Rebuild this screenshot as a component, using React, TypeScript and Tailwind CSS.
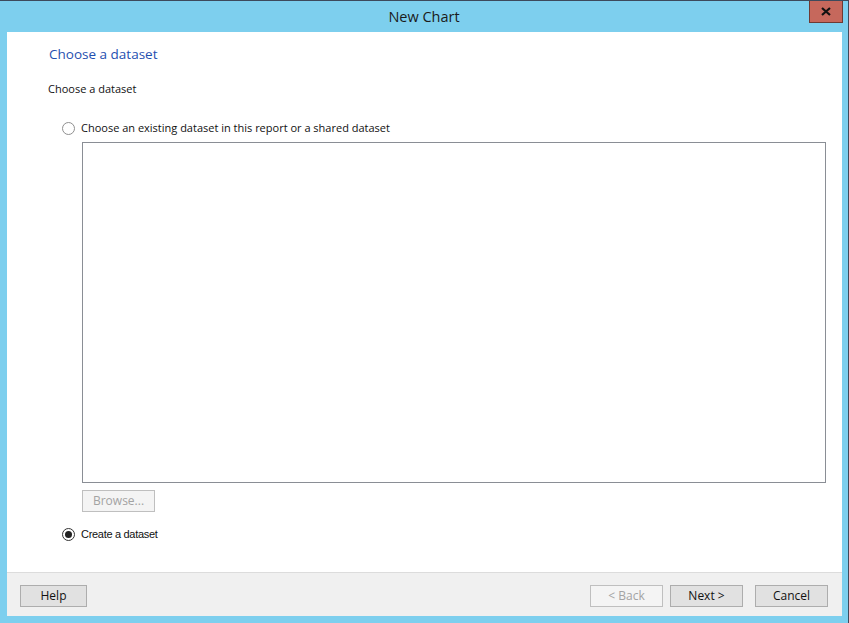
import React from 'react';

const SEGOE = { fontFamily: '"Open Sans", "Noto Sans", sans-serif' };

function Radio({ checked }: { checked?: boolean }) {
  return (
    <span
      className={
        'flex size-[13px] shrink-0 items-center justify-center rounded-full border bg-white ' +
        (checked ? 'border-[#333]' : 'border-[#8f8f8f]')
      }
    >
      {checked && <span className="size-[7px] rounded-full bg-[#222]" />}
    </span>
  );
}

function Button({ label, disabled, wide = 'w-[73px]' }: { label: string; disabled?: boolean; wide?: string }) {
  return (
    <button
      type="button"
      disabled={disabled}
      className={
        'block h-[22px] border text-[12px] leading-none ' +
        wide +
        ' ' +
        (disabled
          ? 'border-[#bfbfbf] bg-[#f4f4f4] text-[#a3a3a3]'
          : 'border-[#adadad] bg-[#e1e1e1] text-[#111]')
      }
      style={SEGOE}
    >
      {label}
    </button>
  );
}

export default function App() {
  return (
    <div className="flex h-[623px] w-[849px] flex-col border-t border-r border-[#3d4a5c] bg-[#7dcfee]">
      {/* title bar */}
      <div className="relative flex h-[31px] shrink-0 items-center justify-center">
        <span className="text-[14.5px] text-[#1b1b1b]" style={SEGOE}>
          New Chart
        </span>
        <button
          type="button"
          className="absolute right-[5px] top-0 flex h-[22px] w-[34px] items-center justify-center border border-t-0 border-[#6e3a33] bg-[#c6685c]"
        >
          <svg width="10" height="9" viewBox="0 0 10 9">
            <path d="M1 1 L9 8 M9 1 L1 8" stroke="#111" strokeWidth="2.2" />
          </svg>
        </button>
      </div>

      <div className="mx-[7px] mb-[7px] mr-[6px] flex flex-1 flex-col">
        {/* page body */}
        <div className="flex flex-1 flex-col bg-white pl-[42px] pr-[16px]" style={SEGOE}>
          <div className="mt-[13px] text-[13.5px] leading-[18px] text-[#1f4fb0]">Choose a dataset</div>
          <div className="mt-[19px] -ml-px text-[11px] leading-[14px] text-[#111]">Choose a dataset</div>

          <div className="mt-[25px] ml-[13px] flex items-center gap-[6px]">
            <Radio />
            <span className="text-[11px] leading-[14px] text-[#111]">
              Choose an existing dataset in this report or a shared dataset
            </span>
          </div>

          <div className="mt-[7px] ml-[33px] h-[341px] border border-[#8a8e95] bg-white" />

          <div className="mt-[7px] ml-[33px]">
            <Button label="Browse..." disabled />
          </div>

          <div className="mt-[15px] ml-[13px] flex items-center gap-[6px]">
            <Radio checked />
            <span
              className="text-[11px] leading-[14px] text-[#111]"
              style={{ fontFamily: '"Liberation Sans", Arial, sans-serif', letterSpacing: '-0.3px' }}
            >
              Create a dataset
            </span>
          </div>
        </div>

        {/* footer */}
        <div className="flex h-[44px] shrink-0 items-center border-t border-[#dcdcdc] bg-[#f0f0f0] pl-[13px] pr-[14px] pt-[3px]">
          <Button label="Help" wide="w-[67px]" />
          <div className="ml-auto flex gap-[7px]">
            <Button label="< Back" disabled />
            <Button label="Next >" />
          </div>
          <div className="ml-[12px]">
            <Button label="Cancel" />
          </div>
        </div>
      </div>
    </div>
  );
}
